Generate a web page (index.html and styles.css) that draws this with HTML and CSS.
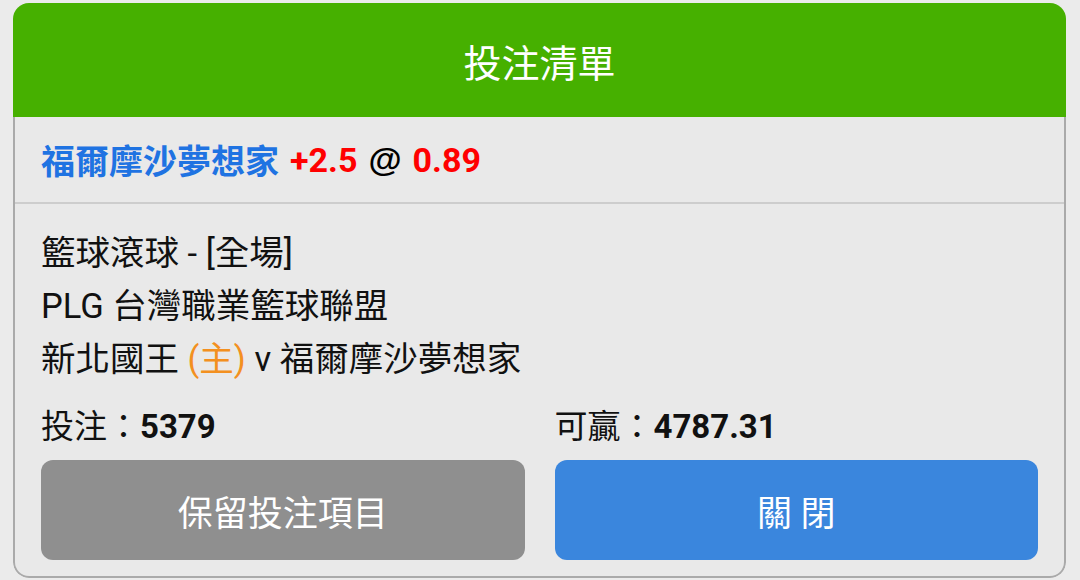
FILE: index.html
```html
<!DOCTYPE html>
<html lang="zh-Hant">
<head>
    <meta charset="UTF-8">
    <title>投注清單</title>
    <link rel="stylesheet" href="styles.css">
</head>
<body>
    <div class="sheet">
        <div class="sheet-head">投注清單</div>
        <div class="sheet-body">
            <div class="pick">
                <span class="pick-team">福爾摩沙夢想家</span>
                <span class="pick-odds">+2.5</span>
                <span class="pick-at">@</span>
                <span class="pick-odds">0.89</span>
            </div>
            <div class="detail">
                <div class="line">籃球滾球 - [全場]</div>
                <div class="line">PLG 台灣職業籃球聯盟</div>
                <div class="line">新北國王 <span class="home">(主)</span> v 福爾摩沙夢想家</div>

                <div class="totals">
                    <div>投注：<b>5379</b></div>
                    <div>可贏：<b>4787.31</b></div>
                </div>

                <div class="actions">
                    <button class="btn btn-keep">保留投注項目</button>
                    <button class="btn btn-close">關 閉</button>
                </div>
            </div>
        </div>
    </div>
</body>
</html>
```

FILE: styles.css
```css
body { margin: 0; background: #ebebeb; font-family: Roboto, "Noto Sans CJK TC", sans-serif; color: #111; }
.sheet { margin: 3px 14px 0 13px; border-radius: 16px; overflow: hidden; }
.sheet-head { height: 114px; background: #46b000; color: #fff; font-size: 38px; display: flex; align-items: center; justify-content: center; }
.sheet-body { background: #e9e9e9; border: 2px solid #aaa; border-top: none; border-radius: 0 0 16px 16px; }
.pick { height: 85px; padding: 0 26px; display: flex; align-items: center; gap: 11px; font-size: 34px; font-weight: bold; border-bottom: 2px solid #cdcdcd; }
.pick-team { color: #1f73e2; }
.pick-odds { color: #f00; }
.pick-at { color: #000; font-family: "Liberation Sans", sans-serif; }
.detail { padding: 23px 26px 16px; font-size: 33px; }
.line { line-height: 53px; font-size: 34.5px; }
.home { color: #f39020; }
.totals { margin-top: 14px; line-height: 53px; display: grid; grid-template-columns: 1fr 1fr; column-gap: 30px; }
.totals b { font-weight: bold; }
.actions { margin-top: 7px; display: grid; grid-template-columns: 1fr 1fr; column-gap: 30px; }
.btn { height: 100px; border: none; border-radius: 12px; color: #fff; font-family: inherit; font-size: 35px; cursor: pointer; }
.btn-keep { background: #8f8f8f; }
.btn-close { background: #3a86dd; }
```
